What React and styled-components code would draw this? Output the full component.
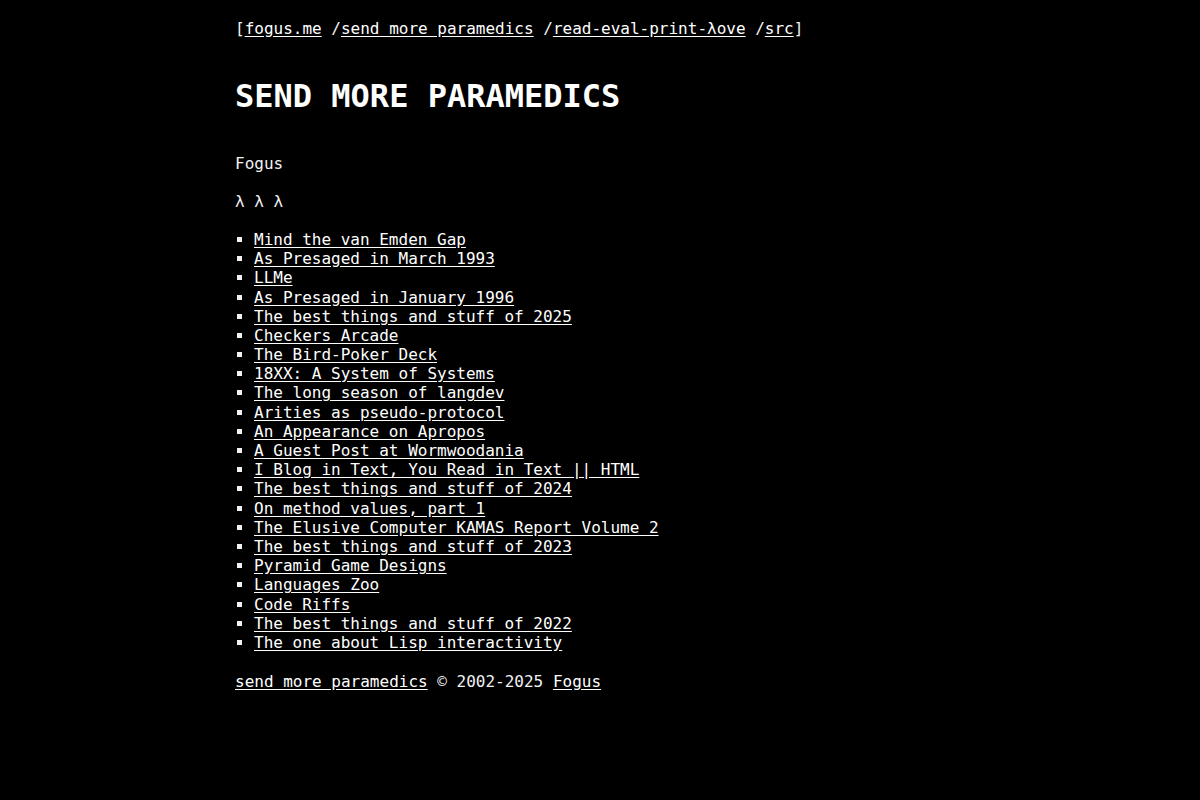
import React from "react";
import styled, { createGlobalStyle } from "styled-components";

const GlobalStyle = createGlobalStyle`
  html, body {
    margin: 0;
    padding: 0;
    background: #000;
  }

  body {
    color: #f2f2f2;
    font-family: "DejaVu Sans Mono", "Liberation Mono", monospace;
    font-size: 16px;
    line-height: 1.2;
  }
`;

const Page = styled.main`
  max-width: 730px;
  margin: 0 auto;
  padding: 19px 0 40px;
`;

const Nav = styled.nav`
  white-space: pre;
`;

const Link = styled.a`
  color: #fff;
  text-decoration: underline;
  text-underline-offset: 2px;
`;

const Title = styled.h1`
  margin: 39px 0 38px;
  font-size: 32px;
  font-weight: 700;
  line-height: 1.2;
  color: #fff;
`;

const Para = styled.p`
  margin: 0 0 19px;
`;

const PostList = styled.ul`
  margin: 0 0 20px;
  padding-left: 19px;
  list-style: none;
`;

const Post = styled.li`
  position: relative;
  line-height: 1.2;

  &::before {
    content: "";
    position: absolute;
    left: -17px;
    top: 7px;
    width: 5px;
    height: 5px;
    background: #f2f2f2;
  }
`;

const posts = [
  "Mind the van Emden Gap",
  "As Presaged in March 1993",
  "LLMe",
  "As Presaged in January 1996",
  "The best things and stuff of 2025",
  "Checkers Arcade",
  "The Bird-Poker Deck",
  "18XX: A System of Systems",
  "The long season of langdev",
  "Arities as pseudo-protocol",
  "An Appearance on Apropos",
  "A Guest Post at Wormwoodania",
  "I Blog in Text, You Read in Text || HTML",
  "The best things and stuff of 2024",
  "On method values, part 1",
  "The Elusive Computer KAMAS Report Volume 2",
  "The best things and stuff of 2023",
  "Pyramid Game Designs",
  "Languages Zoo",
  "Code Riffs",
  "The best things and stuff of 2022",
  "The one about Lisp interactivity",
];

export default function App() {
  return (
    <>
      <GlobalStyle />
      <Page>
        <Nav>
          [<Link href="#">fogus.me</Link> /<Link href="#">send more paramedics</Link> /
          <Link href="#">read-eval-print-λove</Link> /<Link href="#">src</Link>]
        </Nav>

        <Title>SEND MORE PARAMEDICS</Title>

        <Para>Fogus</Para>
        <Para>λ λ λ</Para>

        <PostList>
          {posts.map((p) => (
            <Post key={p}>
              <Link href="#">{p}</Link>
            </Post>
          ))}
        </PostList>

        <Para>
          <Link href="#">send more paramedics</Link> © 2002-2025{" "}
          <Link href="#">Fogus</Link>
        </Para>
      </Page>
    </>
  );
}
